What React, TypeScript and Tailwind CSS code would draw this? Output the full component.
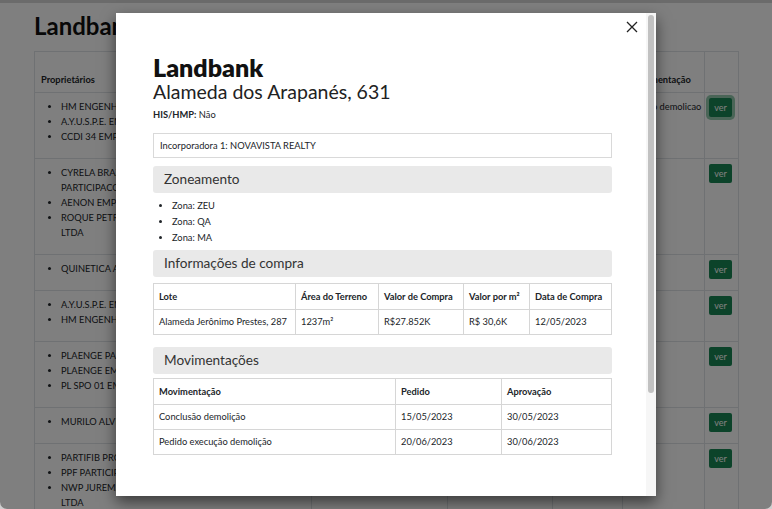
import React from 'react';

type Row = { owners: string[]; mov: string };

const rows: Row[] = [
  {
    owners: ['HM ENGENHARIA E CONSTRUCOES S/A', 'A.Y.U.S.P.E. EMPREENDIMENTOS LTDA', 'CCDI 34 EMPREENDIMENTOS LTDA'],
    mov: 'Pedido demolicao',
  },
  {
    owners: [
      'CYRELA BRAZIL REALTY S/A EMPREEND. E\nPARTICIPACOES',
      'AENON EMPREENDIMENTOS LTDA',
      'ROQUE PETRONI EMPREENDIMENTOS IMOB.\nLTDA',
    ],
    mov: '',
  },
  { owners: ['QUINETICA ADMINISTRACAO E PARTICIPACOES'], mov: '' },
  { owners: ['A.Y.U.S.P.E. EMPREENDIMENTOS LTDA', 'HM ENGENHARIA E CONSTRUCOES S/A'], mov: '' },
  {
    owners: ['PLAENGE PARTICIPACOES LTDA', 'PLAENGE EMPREENDIMENTOS LTDA', 'PL SPO 01 EMPREENDIMENTOS LTDA'],
    mov: '',
  },
  { owners: ['MURILO ALVES DE OLIVEIRA'], mov: '' },
  {
    owners: ['PARTIFIB PROJETOS IMOBILIARIOS', 'PPF PARTICIPACOES LTDA', 'NWP JUREMA EMPREEND. IMOB.\nLTDA'],
    mov: '',
  },
];

const compra = [
  { lote: 'Alameda Jerônimo Prestes, 287', area: '1237m²', valor: 'R$27.852K', m2: 'R$ 30,6K', data: '12/05/2023' },
];

const movimentacoes = [
  { nome: 'Conclusão demolição', pedido: '15/05/2023', aprovacao: '30/05/2023' },
  { nome: 'Pedido execução demolição', pedido: '20/06/2023', aprovacao: '30/06/2023' },
];

function SectionHeader({ children }: { children: React.ReactNode }) {
  return (
    <div className="h-[27px] flex items-center rounded-[3px] bg-[#e9e9e9] px-[11px] text-[13.6px] text-[#333]">
      {children}
    </div>
  );
}

function Background() {
  return (
    <div className="h-full rounded-b-[7px] bg-white border-t-[3px] border-[#d6d6d6] overflow-hidden text-[#212529]">
      <h1 className="pl-[34px] pt-[9px] text-[24px] leading-[28px] font-bold text-[#111]">Landbank</h1>
      <table className="ml-[34px] mt-[11px] w-[704px] table-fixed border-collapse text-[9.3px] leading-[15px]">
        <colgroup>
          <col className="w-[277px]" />
          <col className="w-[136px]" />
          <col className="w-[105px]" />
          <col className="w-[70px]" />
          <col className="w-[82px]" />
          <col className="w-[34px]" />
        </colgroup>
        <thead>
          <tr className="h-[41px] border border-[#dee2e6] align-bottom text-left">
            <th className="px-[6px] pb-[5px] border-x border-[#dee2e6]">Proprietários</th>
            <th className="px-[6px] pb-[5px] border-x border-[#dee2e6]">Endereço</th>
            <th className="px-[6px] pb-[5px] border-x border-[#dee2e6]">Área</th>
            <th className="px-[6px] pb-[5px] border-x border-[#dee2e6]">Zona</th>
            <th className="px-[6px] pb-[5px] border-x border-[#dee2e6] whitespace-nowrap">Movimentação</th>
            <th className="border-x border-[#dee2e6]"></th>
          </tr>
        </thead>
        <tbody>
          {rows.map((r, i) => (
            <tr key={i} className="align-top border border-[#dee2e6]">
              <td className="pl-[6px] pt-[6px] pb-[14px] border-x border-[#dee2e6]">
                <ul className="list-disc pl-[20px] whitespace-pre-line">
                  {r.owners.map((o) => (
                    <li key={o}>{o}</li>
                  ))}
                </ul>
              </td>
              <td className="border-x border-[#dee2e6]"></td>
              <td className="border-x border-[#dee2e6]"></td>
              <td className="border-x border-[#dee2e6]"></td>
              <td className="pl-[6px] pt-[6px] border-x border-[#dee2e6] whitespace-nowrap overflow-hidden">{r.mov}</td>
              <td className="pl-[4px] pt-[5px] border-x border-[#dee2e6]">
                <button
                  className={`h-[19px] w-[23px] rounded-[2px] bg-[#198754] text-[9px] text-white ${
                    i === 0 ? 'ring-[3px] ring-[#4fa77a]/60' : ''
                  }`}
                >
                  ver
                </button>
              </td>
            </tr>
          ))}
        </tbody>
      </table>
    </div>
  );
}

export default function App() {
  return (
    <div className="relative h-[509px] w-[772px] bg-[#cfcfcf] font-['Lato',sans-serif]">
      <Background />

      {/* modal overlay */}
      <div className="absolute inset-0 rounded-b-[7px] bg-black/50 pl-[116px] pt-[13px]">
        <div className="relative flex h-[483px] w-[540px] bg-white shadow-[0_6px_14px_rgba(0,0,0,0.55)]">
          <button className="absolute right-[17px] top-[7px] p-[1px] text-[#222]" aria-label="Fechar">
            <svg width="12" height="12" viewBox="0 0 12 12" fill="none" stroke="currentColor" strokeWidth="1.3">
              <path d="M1 1l10 10M11 1L1 11" />
            </svg>
          </button>

          <div className="flex-1 overflow-hidden pl-[37px] pr-[34px] pt-[40px] text-[#212529]">
            <h2 className="text-[25px] leading-[28px] font-extrabold text-[#111]">Landbank</h2>
            <h3 className="text-[19.5px] leading-[22px] text-[#222]">Alameda dos Arapanés, 631</h3>
            <p className="mt-[5px] text-[9.3px] leading-[14px]">
              <b>HIS/HMP:</b> Não
            </p>

            <div className="mt-[11px] h-[25px] flex items-center border border-[#d9d9d9] px-[6px] text-[9.3px]">
              Incorporadora 1: NOVAVISTA REALTY
            </div>

            <div className="mt-[8px]">
              <SectionHeader>Zoneamento</SectionHeader>
            </div>
            <ul className="mt-[5px] mb-[4px] list-disc pl-[19px] text-[9.3px] leading-[16px]">
              <li>Zona: ZEU</li>
              <li>Zona: QA</li>
              <li>Zona: MA</li>
            </ul>

            <SectionHeader>Informações de compra</SectionHeader>
            <table className="mt-[6px] w-full table-fixed border-collapse text-[9.3px]">
              <colgroup>
                <col className="w-[142px]" />
                <col className="w-[83px]" />
                <col className="w-[85px]" />
                <col className="w-[66px]" />
                <col />
              </colgroup>
              <thead>
                <tr className="h-[26px] text-left whitespace-nowrap">
                  <th className="border border-[#d6d6d6] px-[5px]">Lote</th>
                  <th className="border border-[#d6d6d6] px-[5px]">Área do Terreno</th>
                  <th className="border border-[#d6d6d6] px-[5px]">Valor de Compra</th>
                  <th className="border border-[#d6d6d6] px-[5px]">Valor por m²</th>
                  <th className="border border-[#d6d6d6] px-[5px]">Data de Compra</th>
                </tr>
              </thead>
              <tbody>
                {compra.map((c) => (
                  <tr key={c.lote} className="h-[25px] whitespace-nowrap">
                    <td className="border border-[#d6d6d6] px-[5px]">{c.lote}</td>
                    <td className="border border-[#d6d6d6] px-[5px]">{c.area}</td>
                    <td className="border border-[#d6d6d6] px-[5px]">{c.valor}</td>
                    <td className="border border-[#d6d6d6] px-[5px]">{c.m2}</td>
                    <td className="border border-[#d6d6d6] px-[5px]">{c.data}</td>
                  </tr>
                ))}
              </tbody>
            </table>

            <div className="mt-[12px]">
              <SectionHeader>Movimentações</SectionHeader>
            </div>
            <table className="mt-[4px] w-full table-fixed border-collapse text-[9.3px]">
              <colgroup>
                <col className="w-[242px]" />
                <col className="w-[106px]" />
                <col />
              </colgroup>
              <thead>
                <tr className="h-[26px] text-left">
                  <th className="border border-[#d6d6d6] px-[5px]">Movimentação</th>
                  <th className="border border-[#d6d6d6] px-[5px]">Pedido</th>
                  <th className="border border-[#d6d6d6] px-[5px]">Aprovação</th>
                </tr>
              </thead>
              <tbody>
                {movimentacoes.map((m) => (
                  <tr key={m.nome} className="h-[25px]">
                    <td className="border border-[#d6d6d6] px-[5px]">{m.nome}</td>
                    <td className="border border-[#d6d6d6] px-[5px]">{m.pedido}</td>
                    <td className="border border-[#d6d6d6] px-[5px]">{m.aprovacao}</td>
                  </tr>
                ))}
              </tbody>
            </table>
          </div>

          {/* scrollbar */}
          <div className="w-[10px] bg-[#f6f6f6] pt-[2px]">
            <div className="mx-auto h-[378px] w-[6px] rounded-full bg-[#c1c1c1]" />
          </div>
        </div>
      </div>
    </div>
  );
}
